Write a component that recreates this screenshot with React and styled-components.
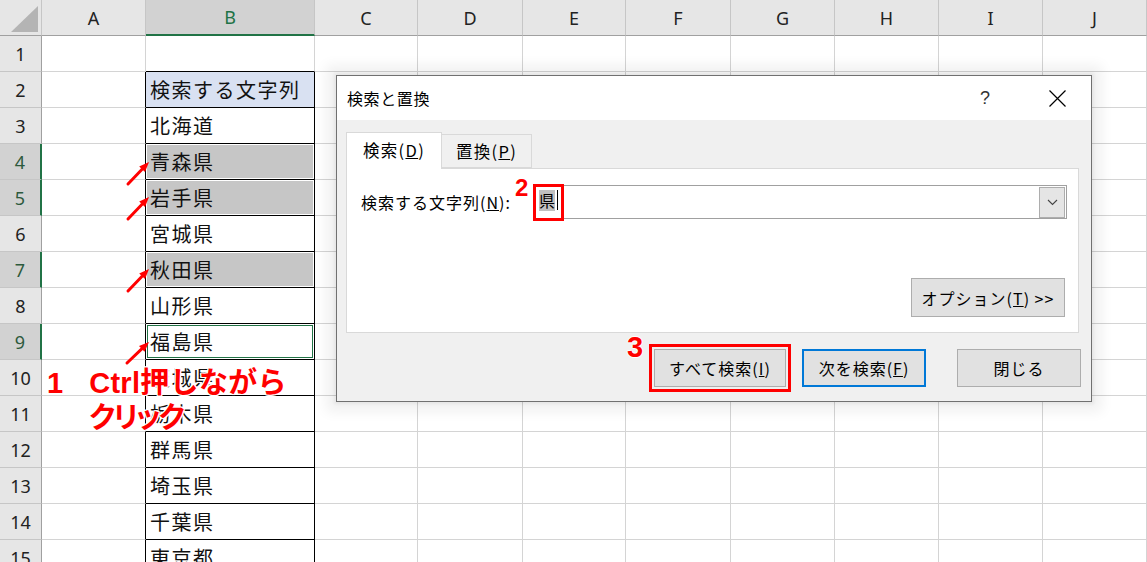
import React from 'react';
import styled, { createGlobalStyle, css } from 'styled-components';

const GlobalStyle = createGlobalStyle`
  html, body { margin: 0; padding: 0; background: #fff; }
  body { font-family: "Noto Sans CJK JP", "Noto Sans", sans-serif; overflow: hidden; }
  *, *::before, *::after { box-sizing: border-box; }
`;

const COLS = [42, 104, 169, 103, 105, 103, 105, 104, 104, 104, 104];
const LETTERS = ['A', 'B', 'C', 'D', 'E', 'F', 'G', 'H', 'I', 'J'];
const DATA = [
  '', '検索する文字列', '北海道', '青森県', '岩手県', '宮城県', '秋田県', '山形県',
  '福島県', '茨城県', '栃木県', '群馬県', '埼玉県', '千葉県', '東京都',
];
const SELECTED = [4, 5, 7];
const CURRENT = 9;
const ACTIVE_ROWS = [4, 5, 7, 9];
const ARROWS = [
  [128, 184, 149, 162],
  [128, 219, 149, 197],
  [128, 291, 149, 269],
  [127, 363, 149, 342],
];

const Page = styled.div`
  position: relative;
  width: 1147px;
  height: 562px;
  overflow: hidden;
  background: #fff;
`;

const Sheet = styled.div`
  display: grid;
  grid-template-columns: ${COLS.map((c) => c + 'px').join(' ')};
  grid-auto-rows: 36px;
`;

const Corner = styled.div`
  display: flex;
  justify-content: flex-end;
  align-items: flex-end;
  padding: 0 3px 3px 0;
  background: #e6e6e6;
  border-right: 1px solid #c6c6c6;
  border-bottom: 1px solid #a0a0a0;
`;

const CornerTriangle = styled.div`
  width: 27px;
  height: 26px;
  background: #b4b4b4;
  clip-path: polygon(100% 0, 100% 100%, 0 100%);
`;

const ColHeader = styled.div`
  display: flex;
  align-items: center;
  justify-content: center;
  background: ${(p) => (p.$active ? '#d2d2d2' : '#e6e6e6')};
  border-right: 1px solid #c6c6c6;
  border-bottom: ${(p) => (p.$active ? '2px solid #217346' : '1px solid #a0a0a0')};
  color: ${(p) => (p.$active ? '#217346' : '#222')};
  font: 18px "Noto Sans", sans-serif;
`;

const RowHeader = styled.div`
  display: flex;
  align-items: center;
  justify-content: center;
  background: ${(p) => (p.$active ? '#d2d2d2' : '#e6e6e6')};
  border-right: ${(p) => (p.$active ? '2px solid #217346' : '1px solid #a0a0a0')};
  border-bottom: 1px solid #c6c6c6;
  color: ${(p) => (p.$active ? '#2d5a3d' : '#222')};
  font: 18px "Noto Sans", sans-serif;
`;

const Cell = styled.div`
  display: flex;
  align-items: center;
  padding-left: 4px;
  border-right: 1px solid ${(p) => p.$rb || '#d4d4d4'};
  border-bottom: 1px solid ${(p) => p.$bb || '#d4d4d4'};
  background: ${(p) => p.$fill || '#fff'};
  font-size: 20px;
  letter-spacing: 1.5px;
  color: #111;
  white-space: nowrap;
  overflow: hidden;
  ${(p) =>
    p.$selected &&
    css`
      background: #c6c6c6;
      box-shadow: inset 0 0 0 1px #fff;
    `}
  ${(p) =>
    p.$current &&
    css`
      box-shadow: inset 0 0 0 1px #fff, inset 0 0 0 2px #217346;
    `}
`;

/* ---------- dialog ---------- */

const Dialog = styled.div`
  position: absolute;
  left: 336px;
  top: 75px;
  width: 756px;
  height: 327px;
  display: flex;
  flex-direction: column;
  background: #f0f0f0;
  border: 1px solid #707070;
  box-shadow: 0 0 3px 2px rgba(0, 0, 0, 0.05), 0 0 12px 10px rgba(0, 0, 0, 0.06);
  font-family: "Noto Sans CJK JP", sans-serif;
  font-size: 16px;
  letter-spacing: 1px;
  color: #000;
`;

const TitleBar = styled.div`
  height: 44px;
  flex: none;
  display: flex;
  align-items: center;
  justify-content: space-between;
  padding: 0 25px 0 10px;
  background: #fff;
`;

const Title = styled.span`
  font-size: 16px;
  letter-spacing: 0.6px;
`;

const WinControls = styled.div`
  display: flex;
  align-items: center;
  gap: 59px;
`;

const Help = styled.span`
  font: 18px "Liberation Sans", sans-serif;
  color: #333;
  letter-spacing: 0;
`;

const Body = styled.div`
  flex: 1;
  display: flex;
  flex-direction: column;
  padding: 12px 12px 14px 9px;
`;

const Tabs = styled.div`
  height: 36px;
  flex: none;
  display: flex;
  align-items: flex-end;
  position: relative;
  z-index: 1;
`;

const Tab = styled.div`
  display: flex;
  align-items: center;
  justify-content: center;
  width: ${(p) => (p.$active ? '96px' : '90px')};
  height: ${(p) => (p.$active ? '37px' : '34px')};
  margin-bottom: ${(p) => (p.$active ? '-1px' : '0')};
  background: ${(p) => (p.$active ? '#fff' : '#f0f0f0')};
  border: 1px solid #d9d9d9;
  border-bottom: ${(p) => (p.$active ? 'none' : '1px solid #d9d9d9')};
  border-left: ${(p) => (p.$active ? '1px solid #d9d9d9' : 'none')};
  padding-bottom: ${(p) => (p.$active ? '2px' : '0')};
  font-size: 16.5px;
  letter-spacing: 1.3px;
`;

const Panel = styled.div`
  flex: 1;
  display: flex;
  flex-direction: column;
  justify-content: space-between;
  background: #fff;
  border: 1px solid #d9d9d9;
  padding: 16px 11px 15px 14px;
`;

const SearchRow = styled.div`
  display: flex;
  align-items: center;
  justify-content: space-between;
  height: 34px;
`;

const Combo = styled.div`
  position: relative;
  width: 533px;
  height: 34px;
  display: flex;
  align-items: center;
  border: 1px solid #a0a0a0;
  background: #fff;
  padding-left: 4px;
`;

const Value = styled.span`
  display: inline-flex;
  align-items: center;
  height: 21px;
  background: #c0c0c0;
  letter-spacing: 0;
  font-size: 16px;
  margin-top: -4px;
`;

const Caret = styled.span`
  width: 1px;
  height: 20px;
  background: #000;
  margin-left: 2px;
  margin-top: -4px;
`;

const DropBtn = styled.div`
  margin-left: auto;
  width: 26px;
  height: 31px;
  margin-right: 1px;
  display: flex;
  align-items: center;
  justify-content: center;
  background: #e5e5e5;
  border: 1px solid #adadad;
`;

const RedBox = styled.span`
  position: absolute;
  left: -2px;
  top: -2px;
  width: 31px;
  height: 37px;
  border: 3px solid #f00;
  pointer-events: none;
`;

const StepNum = styled.span`
  position: absolute;
  font: bold ${(p) => p.$size || 24}px/1 "Liberation Sans", sans-serif;
  color: #f00;
  letter-spacing: 0;
  text-shadow: 1px 0 #fff, -1px 0 #fff, 0 1px #fff, 0 -1px #fff;
`;

const OptionsRow = styled.div`
  display: flex;
  justify-content: flex-end;
  padding-right: 2px;
`;

const Button = styled.div`
  position: relative;
  display: flex;
  align-items: center;
  justify-content: center;
  width: ${(p) => p.$w}px;
  height: ${(p) => p.$h || 38}px;
  background: #e1e1e1;
  border: 1px solid #adadad;
  white-space: nowrap;
  ${(p) =>
    p.$default &&
    css`
      border: 2px solid #0078d7;
    `}
  ${(p) =>
    p.$marked &&
    css`
      outline: 3px solid #f00;
      outline-offset: 2px;
    `}
`;

const ButtonRow = styled.div`
  display: flex;
  justify-content: flex-end;
  margin-top: 16px;
  margin-right: -2px;
`;

const Gap = styled.div`
  width: ${(p) => p.$w}px;
`;

/* ---------- annotations ---------- */

const Overlay = styled.svg`
  position: absolute;
  left: 0;
  top: 0;
  pointer-events: none;
`;

const Note = styled.div`
  position: absolute;
  left: 47px;
  top: 366px;
  display: flex;
  gap: 26px;
  font-family: "Liberation Sans", "Noto Sans CJK JP", sans-serif;
  font-weight: bold;
  font-size: 29px;
  line-height: 35px;
  color: #f00;
  text-shadow: 1px 0 #fff, -1px 0 #fff, 0 1px #fff, 0 -1px #fff, 1px 1px #fff, -1px -1px #fff, 1px -1px #fff, -1px 1px #fff;
  pointer-events: none;
`;

const NoteLines = styled.div`
  display: flex;
  flex-direction: column;
`;

const NoteLine = styled.span`
  font-feature-settings: ${(p) => (p.$palt ? '"palt"' : 'normal')};
  letter-spacing: ${(p) => (p.$palt ? '-2px' : '0.3px')};
`;

function Arrow({ t }) {
  const [x1, y1, x2, y2] = t;
  const dx = x2 - x1;
  const dy = y2 - y1;
  const len = Math.hypot(dx, dy);
  const ux = dx / len;
  const uy = dy / len;
  const nx = -uy;
  const ny = ux;
  const bx = x2 - ux * 10;
  const by = y2 - uy * 10;
  const pts = `${x2},${y2} ${bx + nx * 4},${by + ny * 4} ${bx - nx * 4},${by - ny * 4}`;
  return (
    <g>
      <path d={`M${x1} ${y1} L${bx} ${by}`} stroke="#f00" strokeWidth="3" strokeLinecap="round" />
      <polygon points={pts} fill="#f00" />
    </g>
  );
}

function renderRow(r) {
  const text = DATA[r - 1];
  const inTable = r >= 2;
  return (
    <React.Fragment key={r}>
      <RowHeader $active={ACTIVE_ROWS.includes(r)}>{r}</RowHeader>
      <Cell $rb={inTable ? '#000' : undefined} />
      <Cell
        $rb={inTable ? '#000' : undefined}
        $bb="#000"
        $fill={r === 2 ? '#d9e1f2' : undefined}
        $selected={SELECTED.includes(r)}
        $current={r === CURRENT}
      >
        {text}
      </Cell>
      {LETTERS.slice(2).map((l) => (
        <Cell key={l} />
      ))}
    </React.Fragment>
  );
}

export default function App() {
  const rows = Array.from({ length: 15 }, (_, i) => i + 1);
  return (
    <Page>
      <GlobalStyle />
      <Sheet>
        <Corner>
          <CornerTriangle />
        </Corner>
        {LETTERS.map((l) => (
          <ColHeader key={l} $active={l === 'B'}>
            {l}
          </ColHeader>
        ))}
        {rows.map(renderRow)}
      </Sheet>

      <Overlay width="1147" height="562" viewBox="0 0 1147 562">
        {ARROWS.map((a, i) => (
          <Arrow key={i} t={a} />
        ))}
      </Overlay>

      <Note>
        <span>1</span>
        <NoteLines>
          <NoteLine>Ctrl押しながら</NoteLine>
          <NoteLine $palt>クリック</NoteLine>
        </NoteLines>
      </Note>

      <Dialog>
        <TitleBar>
          <Title>検索と置換</Title>
          <WinControls>
            <Help>?</Help>
            <svg width="17" height="17" viewBox="0 0 17 17">
              <path d="M0.5 0.5 L16.5 16.5 M16.5 0.5 L0.5 16.5" stroke="#000" strokeWidth="1.2" />
            </svg>
          </WinControls>
        </TitleBar>
        <Body>
          <Tabs>
            <Tab $active>
              検索(<u>D</u>)
            </Tab>
            <Tab>
              置換(<u>P</u>)
            </Tab>
          </Tabs>
          <Panel>
            <SearchRow>
              <span>
                検索する文字列(<u>N</u>):
              </span>
              <Combo>
                <Value>県</Value>
                <Caret />
                <DropBtn>
                  <svg width="11" height="7" viewBox="0 0 11 7">
                    <path d="M1 1 L5.5 5.5 L10 1" fill="none" stroke="#444" strokeWidth="1.1" />
                  </svg>
                </DropBtn>
                <RedBox />
                <StepNum $size={24} style={{ left: -20, top: -10 }}>
                  2
                </StepNum>
              </Combo>
            </SearchRow>
            <OptionsRow>
              <Button $w={154} $h={39}>
                オプション(<u>T</u>) &gt;&gt;
              </Button>
            </OptionsRow>
          </Panel>
          <ButtonRow>
            <Button $w={132} $marked>
              すべて検索(<u>I</u>)
              <StepNum $size={29} style={{ left: -28, top: -17 }}>
                3
              </StepNum>
            </Button>
            <Gap $w={16} />
            <Button $w={124} $default>
              次を検索(<u>F</u>)
            </Button>
            <Gap $w={31} />
            <Button $w={124}>閉じる</Button>
          </ButtonRow>
        </Body>
      </Dialog>
    </Page>
  );
}
